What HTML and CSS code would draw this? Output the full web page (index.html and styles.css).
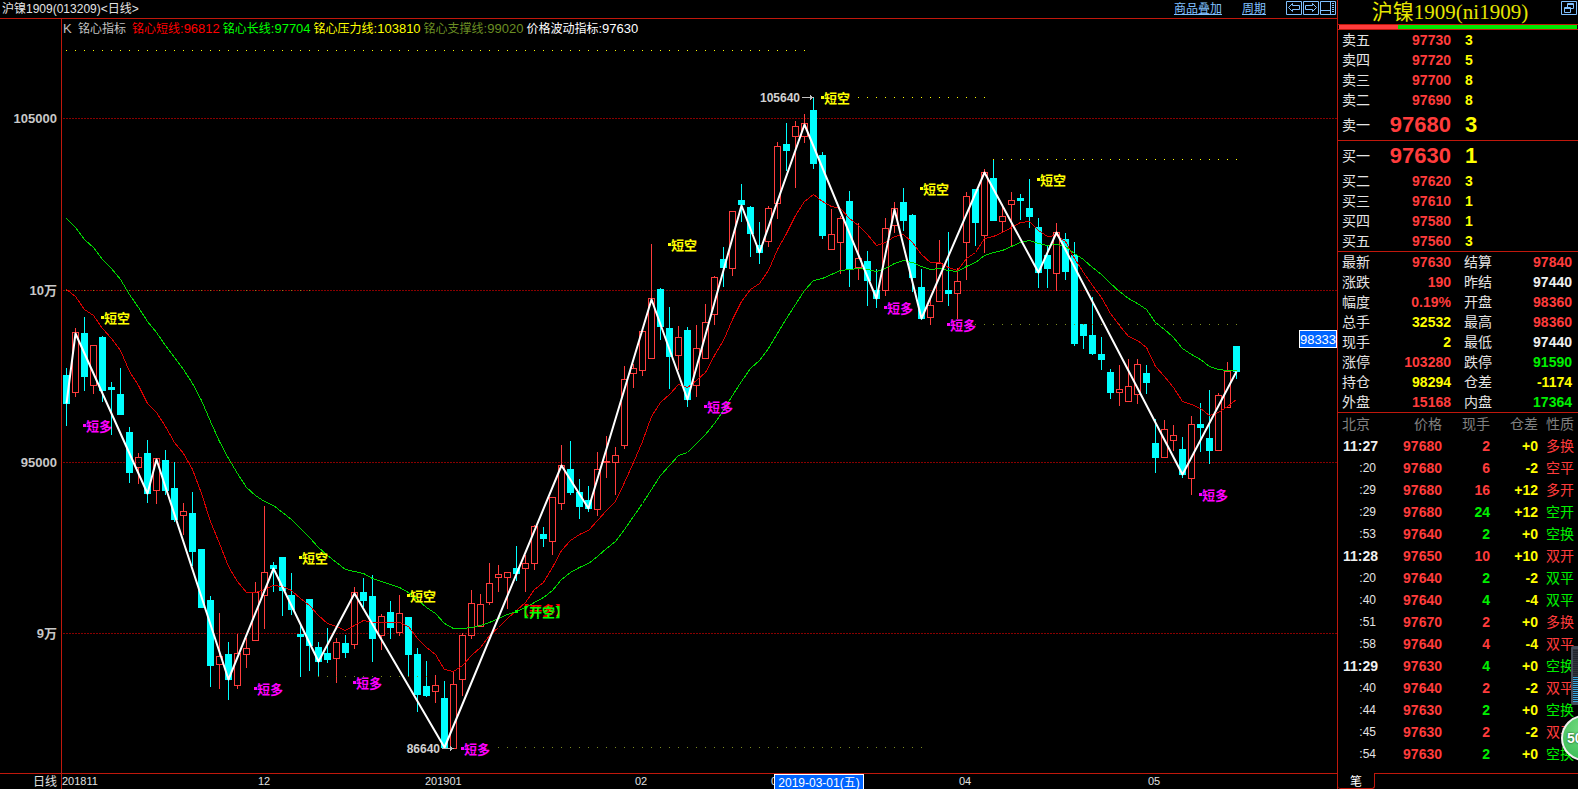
FILE: index.html
```html
<!DOCTYPE html>
<html lang="zh-CN">
<head>
<meta charset="utf-8">
<title>沪镍1909 日线</title>
<link rel="stylesheet" href="styles.css">
</head>
<body>
<div class="app">
  <main class="main">
    <header class="topbar">
      <h1 class="topbar-title">沪镍1909(013209)&lt;日线&gt;</h1>
      <nav class="topbar-nav">
        <a class="nav-link" href="#overlay">商品叠加</a>
        <a class="nav-link" href="#period">周期</a>
        <span class="tool-group">
          <button class="tool" aria-label="后退"><svg width="16" height="14" viewBox="0 0 16 14"><path d="M.5 .5h15v13h-15z M2.5 6.500l4-4v2h7v4h-7v2z"/></svg></button>
          <button class="tool" aria-label="前进"><svg width="16" height="14" viewBox="0 0 16 14"><path d="M.5 .5h15v13h-15z M13.500 6.500l-4-4v2h-7v4h7v2z"/></svg></button>
          <button class="tool" aria-label="分栏"><svg width="16" height="14" viewBox="0 0 16 14"><path d="M.5 .5h15v13h-15z M10.500 .5v13 M.5 9.500h10 M12 2.500h2 M12 4.500h2 M12 6.500h2 M12 8.500h2 M12 10.500h2"/></svg></button>
        </span>
      </nav>
    </header>
    <section class="chart">
      <svg class="plot" id="plot" viewBox="0 19 1337 770" preserveAspectRatio="xMinYMin meet" role="img" aria-label="日线K线图"></svg>
      <div class="legend">
        <span class="lg-k">K</span>
        <span class="lg-name">铭心指标</span>
        <span class="lg-short">铭心短线<b>:96812</b></span>
        <span class="lg-long">铭心长线<b>:97704</b></span>
        <span class="lg-press">铭心压力线<b>:103810</b></span>
        <span class="lg-supp">铭心支撑线<b>:99020</b></span>
        <span class="lg-wave">价格波动指标<b>:97630</b></span>
      </div>
    </section>
  </main>
  <aside class="panel">
    <div class="panel-title">
      <h2>沪镍1909(ni1909)</h2>
      <button class="tool restore" aria-label="还原"><svg width="16" height="14" viewBox="0 0 16 14"><path d="M.5 .5h15v13h-15z M6.500 6v-3.500h6v5h-3 M6.500 3.500h6 M3.500 6.500h6v5h-6z M3.500 7.500h6"/></svg></button>
    </div>
    <div class="ratio"><span class="ratio-sell"></span><span class="ratio-buy"></span></div>
    <table class="book asks">
      <colgroup><col class="c-label"><col class="c-price"><col></colgroup>
      <tr><th>卖五</th><td class="r">97730</td><td class="q">3</td></tr>
      <tr><th>卖四</th><td class="r">97720</td><td class="q">5</td></tr>
      <tr><th>卖三</th><td class="r">97700</td><td class="q">8</td></tr>
      <tr><th>卖二</th><td class="r">97690</td><td class="q">8</td></tr>
      <tr class="best"><th>卖一</th><td class="r">97680</td><td class="q">3</td></tr>
    </table>
    <table class="book bids">
      <colgroup><col class="c-label"><col class="c-price"><col></colgroup>
      <tr class="best"><th>买一</th><td class="r">97630</td><td class="q">1</td></tr>
      <tr><th>买二</th><td class="r">97620</td><td class="q">3</td></tr>
      <tr><th>买三</th><td class="r">97610</td><td class="q">1</td></tr>
      <tr><th>买四</th><td class="r">97580</td><td class="q">1</td></tr>
      <tr><th>买五</th><td class="r">97560</td><td class="q">3</td></tr>
    </table>
    <table class="book stats">
      <colgroup><col class="c-label"><col class="c-price"><col class="c-label2"><col></colgroup>
      <tr><th>最新</th><td class="r">97630</td><th>结算</th><td class="r">97840</td></tr>
      <tr><th>涨跌</th><td class="r">190</td><th>昨结</th><td class="w">97440</td></tr>
      <tr><th>幅度</th><td class="r">0.19%</td><th>开盘</th><td class="r">98360</td></tr>
      <tr><th>总手</th><td class="y">32532</td><th>最高</th><td class="r">98360</td></tr>
      <tr><th>现手</th><td class="y">2</td><th>最低</th><td class="w">97440</td></tr>
      <tr><th>涨停</th><td class="r">103280</td><th>跌停</th><td class="g">91590</td></tr>
      <tr><th>持仓</th><td class="y">98294</td><th>仓差</th><td class="y">-1174</td></tr>
      <tr><th>外盘</th><td class="r">15168</td><th>内盘</th><td class="g">17364</td></tr>
    </table>
    <table class="ticks">
      <colgroup><col class="t-time"><col class="t-price"><col class="t-vol"><col class="t-diff"><col></colgroup>
      <thead><tr><th>北京</th><th>价格</th><th>现手</th><th>仓差</th><th>性质</th></tr></thead>
      <tbody>
      <tr><td class="w">11:27</td><td class="r">97680</td><td class="r">2</td><td class="y">+0</td><td class="r">多换</td></tr>
      <tr><td class="s">:20</td><td class="r">97680</td><td class="r">6</td><td class="y">-2</td><td class="r">空平</td></tr>
      <tr><td class="s">:29</td><td class="r">97680</td><td class="r">16</td><td class="y">+12</td><td class="r">多开</td></tr>
      <tr><td class="s">:29</td><td class="r">97680</td><td class="g">24</td><td class="y">+12</td><td class="g">空开</td></tr>
      <tr><td class="s">:53</td><td class="r">97640</td><td class="g">2</td><td class="y">+0</td><td class="g">空换</td></tr>
      <tr><td class="w">11:28</td><td class="r">97650</td><td class="r">10</td><td class="y">+10</td><td class="r">双开</td></tr>
      <tr><td class="s">:20</td><td class="r">97640</td><td class="g">2</td><td class="y">-2</td><td class="g">双平</td></tr>
      <tr><td class="s">:40</td><td class="r">97640</td><td class="g">4</td><td class="y">-4</td><td class="g">双平</td></tr>
      <tr><td class="s">:51</td><td class="r">97670</td><td class="r">2</td><td class="y">+0</td><td class="r">多换</td></tr>
      <tr><td class="s">:58</td><td class="r">97640</td><td class="r">4</td><td class="y">-4</td><td class="r">双平</td></tr>
      <tr><td class="w">11:29</td><td class="r">97630</td><td class="g">4</td><td class="y">+0</td><td class="g">空换</td></tr>
      <tr><td class="s">:40</td><td class="r">97640</td><td class="r">2</td><td class="y">-2</td><td class="r">双平</td></tr>
      <tr><td class="s">:44</td><td class="r">97630</td><td class="g">2</td><td class="y">+0</td><td class="g">空换</td></tr>
      <tr><td class="s">:45</td><td class="r">97630</td><td class="r">2</td><td class="y">-2</td><td class="r">双平</td></tr>
      <tr><td class="s">:54</td><td class="r">97630</td><td class="g">2</td><td class="y">+0</td><td class="g">空换</td></tr>
      </tbody>
    </table>
    <div class="tabs"><button class="tab">笔</button><span class="tabs-rest"></span></div>
  </aside>
  <div class="meter"><span class="meter-fill"></span></div>
  <div class="ball">50</div>
</div>
<script src="chart.js"></script>
</body>
</html>
```
FILE: styles.css
```css
* { box-sizing: border-box; }
html, body { height: 100%; }
body {
  margin: 0;
  background: #000;
  color: #e4e4e4;
  font-family: "Liberation Sans", "Noto Sans CJK SC", sans-serif;
  font-size: 12px;
}
.app { position: relative; display: flex; min-height: 100vh; overflow: hidden; }
.main { flex: 1; min-width: 0; display: flex; flex-direction: column; }
.topbar {
  display: flex;
  justify-content: space-between;
  align-items: center;
  height: 19px;
  padding-left: 2px;
  border-bottom: 1px solid #c0180c;
}
.topbar-title { margin: 0; font-size: 12px; line-height: 16px; font-weight: normal; }
.topbar-nav { display: flex; align-items: center; gap: 20px; padding-right: 1px; line-height: 16px; }
.nav-link { color: #80c0ff; }
.tool-group { display: flex; gap: 1px; margin-bottom: 2px; }
.tool { display: block; padding: 0; border: 0; background: none; }
.tool svg { display: block; fill: none; stroke: #80c0ff; stroke-width: 1; }

.chart { position: relative; flex: 1; min-height: 0; }
.plot { display: block; width: 100%; height: auto; font-size: 12px; }
.plot text { white-space: pre; }
.legend {
  position: absolute;
  top: 2px;
  left: 63px;
  display: flex;
  gap: 3px;
  line-height: 16px;
}
.legend b { font-size: 13px; font-weight: normal; }
.lg-k { color: #c0c0c0; font-size: 13px; width: 12px; }
.lg-name { color: #c0c0c0; margin-right: 3px; }
.lg-short { color: #f00; }
.lg-long { color: #0f0; }
.lg-press { color: #ff0; }
.lg-supp { color: #6b8e23; }
.lg-wave { color: #fff; }

.frame { fill: #c0180c; }
.grid { stroke: #880000; stroke-dasharray: 2 1; }
.lvl-y { stroke: #ff0; stroke-dasharray: 1 8; }
.lvl-o { stroke: #7c8c20; stroke-dasharray: 1 8; }
.up { fill: none; stroke: #ff3c3c; }
.up-w { fill: #ff3c3c; }
.down { fill: #0ff; }
.ma-s { fill: none; stroke: #d80000; }
.ma-l { fill: none; stroke: #00d800; }
.zig { fill: none; stroke: #fff; stroke-width: 2; stroke-linejoin: round; shape-rendering: geometricPrecision; }
.sig { font-size: 13px; font-weight: bold; }
.sig-k { fill: #ff0; }
.sig-d { fill: #f0f; }
.sig-o { fill: #0f0; }
.sig-u { fill: #f00; }
.tick { fill: #c8c8c8; font-size: 13px; font-weight: bold; }
.tick-x { fill: #d0d0d0; font-size: 12px; }
.date { fill: #e0e0e0; font-size: 11px; }
.date-cjk { fill: #e0e0e0; font-size: 12px; }
.arrow { fill: #c0c0c0; }
.tag { fill: #0064ff; stroke: #fff; }
.tag-t { fill: #fff; font-size: 13px; }
.tag-d { fill: #fff; font-size: 12px; }

.panel {
  width: 241px;
  display: flex;
  flex-direction: column;
  border-left: 1px solid #c0180c;
}
.panel-title {
  display: flex;
  align-items: flex-start;
  height: 25px;
  padding: 1px 1px 0;
  border-bottom: 1px solid #c0180c;
}
.panel-title h2 {
  flex: 1;
  margin: 0;
  text-align: center;
  font: 21px/22px "Liberation Serif", "Noto Sans CJK SC", serif;
  color: #e6e600;
}
.ratio { display: flex; height: 5px; padding: 0 1px; border-bottom: 1px solid #c0180c; }
.ratio-sell { flex: 59; background: #ff3c3c; }
.ratio-buy { flex: 179; background: #00e600; }
table { width: 100%; table-layout: fixed; border-collapse: collapse; }
th, td { padding: 0; white-space: nowrap; font-size: 14px; line-height: 20px; }
th { font-weight: normal; text-align: left; }
td { font-weight: bold; text-align: right; }
.book { border-bottom: 1px solid #c0180c; border-collapse: separate; border-spacing: 0; }
.book tr { height: 20px; }
.book th:first-child { padding-left: 4px; }
.book td:last-child { padding-right: 6px; }
.c-label { width: 49px; }
.c-price { width: 64px; }
.c-label2 { width: 44px; }
.stats th:nth-child(3) { padding-left: 13px; }
.q { color: #ff0; text-align: left; padding-left: 14px; }
.best td { font-size: 22px; line-height: 30px; }
.r { color: #ff3c3c; }
.g { color: #00f000; }
.y { color: #ff0; }
.w { color: #f0f0f0; }
.t-time { width: 40px; }
.t-price { width: 64px; }
.t-vol { width: 48px; }
.t-diff { width: 48px; }
.ticks th, .ticks td { height: 22px; line-height: 22px; text-align: right; }
.ticks th { color: #808080; }
.ticks th:first-child { text-align: left; padding-left: 4px; }
.ticks td:last-child, .ticks th:last-child { font-weight: normal; text-align: left; padding-left: 8px; }
.ticks .s { font-size: 12px; font-weight: normal; padding-right: 2px; }
.tabs { display: flex; height: 16px; margin-top: auto; }
.tab {
  width: 37px;
  padding: 0;
  border: 1px solid #c0180c;
  border-width: 0 1px 1px 0;
  border-radius: 0 0 3px 3px;
  background: none;
  color: #fff;
  font: 12px/14px "Noto Sans CJK SC", sans-serif;
}
.tabs-rest { flex: 1; border-top: 1px solid #c0180c; }

.meter {
  position: absolute;
  right: 0;
  top: 646px;
  width: 7px;
  height: 59px;
  padding: 3px 0 3px 2px;
  background: #454c58;
  border-radius: 2px 0 0 2px;
}
.meter-fill {
  display: block;
  height: 100%;
  background: repeating-linear-gradient(transparent 0 1px, #20242c 1px 2px), linear-gradient(#30343c 50%, #3aa8e0 50%);
}
.ball {
  position: absolute;
  right: -29px;
  top: 715px;
  width: 46px;
  height: 46px;
  padding-left: 4px;
  border: 2px solid #f0f0f0;
  border-radius: 50%;
  background: radial-gradient(circle at 50% 30%, #78dc82, #30b850);
  color: #fff;
  font-size: 14px;
  font-weight: bold;
  line-height: 42px;
  text-shadow: 0 0 2px #003000;
}
```
FILE: chart.js
```js
const svg = document.getElementById('plot');
const NS = 'http://www.w3.org/2000/svg';
const X0 = 66, STEP = 9;
const x = i => X0 + i * STEP;

function add(tag, attrs, text) {
  const el = document.createElementNS(NS, tag);
  for (const k in attrs) el.setAttribute(k, attrs[k]);
  if (text !== undefined) el.textContent = text;
  else el.setAttribute('shape-rendering', 'crispEdges');
  svg.appendChild(el);
}
const box = (cls, left, top, w, h) => add('rect', { class: cls, x: left, y: top, width: w, height: h });
const label = (cls, left, base, text, anchor) =>
  add('text', { class: cls, x: left, y: base, 'text-anchor': anchor || 'start' }, text);
const hline = (cls, x1, x2, y) => add('path', { class: cls, d: `M${x1} ${y + 0.5}H${x2}` });

// Horizontal price grid
for (const y of [118, 290, 462, 633]) hline('grid', 63, 1337, y);

// Candles: kind, high, body top, body bottom, low
const candles = `c368,375,404,426 r328,332,393,397 c317,333,377,391 r345,345,386,394 c336,337,391,402
c382,387,390,435 c368,394,415,415 c427,432,473,483 r453,457,468,484 c440,453,494,503
r458,458,491,504 c450,460,491,495 c462,488,520,522 r503,511,516,535 c492,513,552,566
c549,549,608,608 c596,600,666,687 r613,656,665,689 c642,654,680,700 r634,653,686,689
r638,648,655,668 r582,592,641,641 r506,572,596,629 c562,565,569,592 c557,557,591,616
c573,595,610,615 c625,634,637,677 c599,599,646,671 c642,647,662,676 c628,653,660,663
r638,642,659,683 c635,643,653,658 r587,592,645,649 c578,592,601,607 c575,596,639,662
r614,616,636,650 c601,612,628,639 r595,613,633,636 c617,617,655,676 c648,654,695,712
c661,686,696,697 r675,685,692,703 c681,698,748,748 r671,684,749,749 r633,635,680,696
r590,603,636,639 r594,604,627,627 r563,583,603,605 r565,574,578,592 r572,572,578,609
c546,568,574,581 r555,563,569,592 r525,526,564,570 c527,534,539,547 r497,497,542,555
r445,465,504,510 c441,469,493,495 c479,492,507,519 c486,500,509,512 r452,469,510,516
r436,461,463,478 r447,455,463,495 r366,379,446,449 r364,368,374,388 r331,331,371,376
r244,298,359,359 c288,289,327,340 c307,328,357,389 r326,337,356,370 c327,330,400,407
r325,348,386,397 r304,322,359,359 r276,277,315,325 c247,259,268,287 r211,211,269,276
c184,200,205,222 c206,207,234,257 c222,245,253,264 r206,208,242,247 r142,146,204,219
c123,144,151,171 r121,126,137,188 r114,123,137,143 c97,110,164,169 c152,155,236,239
r209,234,250,250 r216,218,243,274 c191,201,270,287 r223,258,268,280 c251,261,281,306
c269,290,299,308 r218,228,291,296 r202,208,226,233 c188,202,221,231 c214,215,278,292
c269,287,319,320 r299,305,318,325 r240,263,302,302 c232,290,294,306 r268,281,294,319
r192,196,243,280 c189,189,223,246 r169,172,236,253 c159,178,221,221 r204,216,222,232
r192,200,205,247 c194,198,201,220 c179,208,217,228 c218,227,273,288 c246,255,269,288
r223,232,274,291 c233,239,272,280 c242,255,344,346 c324,324,336,349 c297,335,354,355
c337,354,360,370 c369,372,393,399 r365,389,393,406 r359,386,402,402 r359,364,395,404
c365,373,383,394 c419,443,458,473 r420,429,458,458 r425,435,441,451 c437,449,475,478
r416,424,479,495 c403,424,428,452 c390,438,451,464 r393,395,451,451 r362,371,408,408
c346,346,372,379`.split(/\s+/);

candles.forEach((s, i) => {
  const [hi, top, bot, lo] = s.slice(1).split(',').map(Number);
  if (s[0] === 'c') {
    box('down', x(i), hi, 1, lo - hi);
    box('down', x(i) - 3, top, 7, bot - top);
  } else {
    if (top > hi) box('up-w', x(i), hi, 1, top - hi);
    if (lo > bot) box('up-w', x(i), bot, 1, lo - bot);
    box('up', x(i) - 2.5, top + 0.5, 6, bot - top - 1);
  }
});

// Moving averages, one value per candle
const shortMa = [289,296,309,315,328,338,350,371,385,403,412,426,442,453,469,493,521,543,566,581,592,592,589,585,586,590,598,605,615,623,626,630,625,620,622,622,622,622,626,638,647,654,669,671,665,655,647,635,627,618,610,602,589,582,567,550,540,534,530,520,510,501,482,462,441,416,402,394,384,387,380,372,355,340,319,301,289,283,270,249,233,215,201,194,201,206,208,218,225,234,245,242,236,234,242,254,262,262,267,270,258,252,238,236,232,227,222,221,230,236,235,241,258,272,285,297,313,325,336,340,347,366,376,387,401,404,408,415,412,406,399];
const longMa = [218,227,239,247,259,268,279,294,307,321,332,345,357,369,383,400,421,441,458,473,487,495,501,505,512,519,528,537,547,555,562,569,571,573,578,581,584,587,592,599,607,613,623,628,628,627,625,622,618,614,611,607,602,597,590,579,572,567,563,556,548,541,529,516,503,489,475,465,455,452,443,434,423,410,395,381,368,360,348,333,318,304,290,280,278,274,270,269,268,269,271,268,263,260,262,266,269,268,270,271,266,262,255,252,250,246,242,240,243,245,244,246,253,259,267,274,283,291,298,303,309,322,329,337,348,354,359,366,369,370,370];
const line = (cls, pts) => add('polyline', { class: cls, points: pts.map(p => `${x(p[0]) + 0.5},${p[1] + 0.5}`).join(' ') });
line('ma-s', shortMa.map((v, i) => [i, v]));
line('ma-l', longMa.map((v, i) => [i, v]));

// Pressure and support levels
[[66, 805, 50], [858, 985, 97], [993, 1237, 159]].forEach(l => hline('lvl-y', ...l));
[[66, 310, 290], [318, 427, 676], [498, 922, 747], [957, 1237, 324]].forEach(l => hline('lvl-o', ...l));

// Price swing line
line('zig', [[0,403],[1,333],[9,493],[10,459],[18,679],[23,568],[28,661],[32,593],[42,747],[55,465],[58,508],[65,299],[69,399],[75,205],[77,252],[82,124],[90,298],[92,209],[95,318],[102,172],[108,272],[110,232],[124,474],[130,371]]);

// Trade signals
const signal = (cls, px, y, text) => {
  box(cls, px - 1, y - 1, 3, 3);
  label('sig ' + cls, px + 2, y + 6, text);
};
[[102,317],[300,557],[408,595],[669,244],[822,97],[921,188],[1038,179]].forEach(p => signal('sig-k', p[0], p[1], '短空'));
[[84,425],[255,688],[354,682],[462,748],[705,406],[885,307],[948,324],[1200,494]].forEach(p => signal('sig-d', p[0], p[1], '短多'));
label('sig sig-u', 516, 615, '【开多】');
box('sig-o', 515, 610, 3, 3);
label('sig sig-o', 516, 617, '【开空】');

// Extremes
function extreme(text, right, y) {
  label('tick tick-x', right, y + 5, text, 'end');
  box('arrow', right + 2, y, 11, 1);
  add('path', { class: 'arrow', d: `M${right + 10} ${y - 2}l4 2.5l-4 2.5z` });
}
extreme('105640', 800, 97);
extreme('86640', 440, 748);

// Frame and axes
box('frame', 61, 19, 1, 770);
box('frame', 0, 773, 1337, 1);
label('tick', 57, 123, '105000', 'end');
label('tick', 57, 295, '10万', 'end');
label('tick', 57, 467, '95000', 'end');
label('tick', 57, 638, '9万', 'end');
label('date-cjk', 57, 786, '日线', 'end');
[['201811', 62], ['12', 258], ['201901', 425], ['02', 635], ['03', 771], ['04', 959], ['05', 1148]]
  .forEach(d => label('date', d[1], 785, d[0]));

// Cursor tags
box('tag', 774.5, 774.5, 89, 16);
label('tag-d', 819, 787, '2019-03-01(五)', 'middle');
box('tag', 1299.5, 330.5, 37, 17);
label('tag-t', 1318, 344, '98333', 'middle');
```
